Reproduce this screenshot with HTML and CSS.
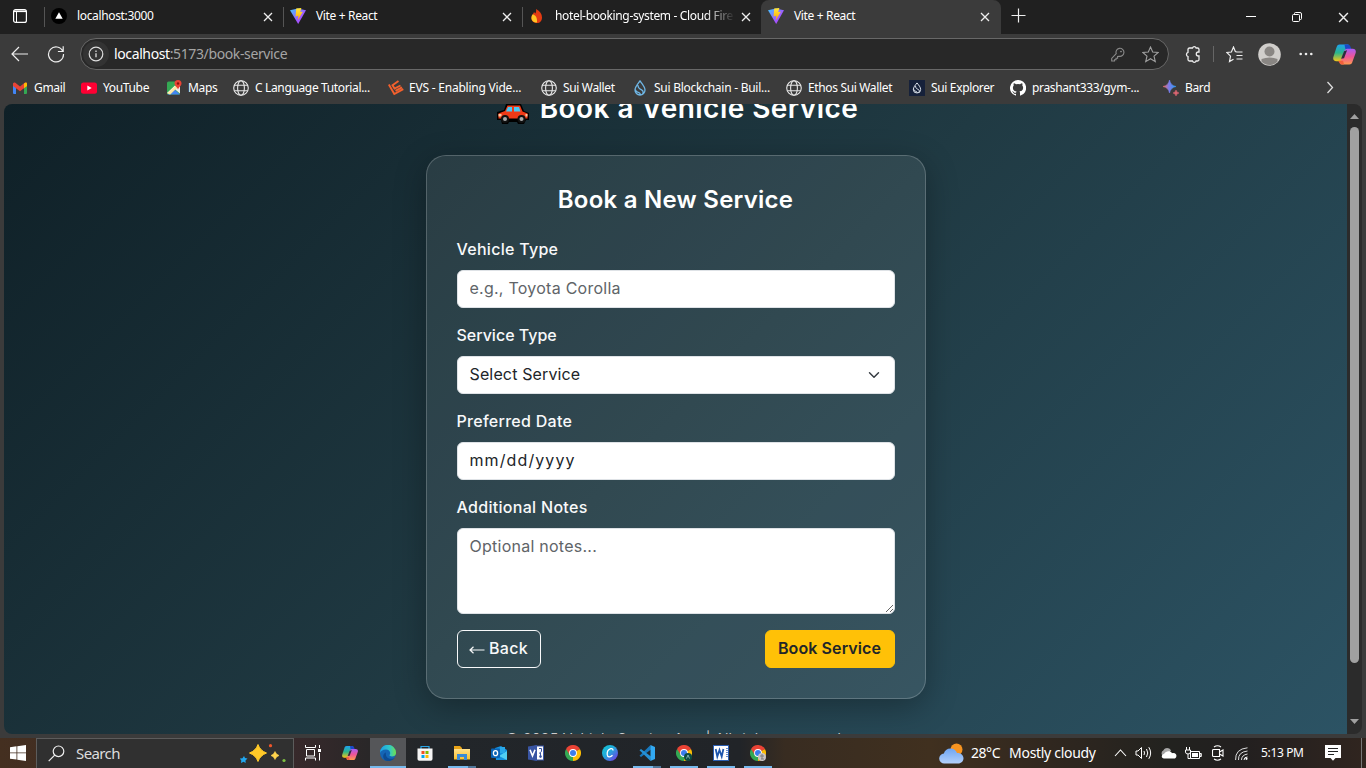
FILE: index.html
```html
<!DOCTYPE html>
<html lang="en">
<head>
<meta charset="utf-8">
<title>Vite + React</title>
<link rel="stylesheet" href="styles.css">
</head>
<body>
<svg class="defs" aria-hidden="true">
  <defs>
    <linearGradient id="gv" x1="0" y1="0" x2="1" y2="1"><stop offset="0" stop-color="#3fc8ff"/><stop offset=".55" stop-color="#9a60ff"/><stop offset="1" stop-color="#bd34fe"/></linearGradient>
    <linearGradient id="gy" x1="0" y1="0" x2="0" y2="1"><stop offset="0" stop-color="#ffe83d"/><stop offset="1" stop-color="#ffa800"/></linearGradient>
    <linearGradient id="gc1" x1="0" y1="0" x2="0" y2="1"><stop offset="0" stop-color="#1fa2f0"/><stop offset=".5" stop-color="#2bb58a"/><stop offset="1" stop-color="#f5c518"/></linearGradient>
    <linearGradient id="gc2" x1="0" y1="0" x2="0" y2="1"><stop offset="0" stop-color="#a95cf5"/><stop offset=".5" stop-color="#ee5598"/><stop offset="1" stop-color="#ff9a4d"/></linearGradient>
    <linearGradient id="ge" x1="0" y1="0" x2="1" y2="0"><stop offset="0" stop-color="#1c9ee8"/><stop offset=".6" stop-color="#2fc8c8"/><stop offset="1" stop-color="#72e04a"/></linearGradient>
    <linearGradient id="gcv" x1="0" y1="0" x2="1" y2="1"><stop offset="0" stop-color="#12c8d2"/><stop offset=".45" stop-color="#22a8dc"/><stop offset="1" stop-color="#7d2ae8"/></linearGradient>
    <linearGradient id="gb" x1="0" y1="0" x2="1" y2="0"><stop offset="0" stop-color="#ef6a5a"/><stop offset=".45" stop-color="#7d7bea"/><stop offset="1" stop-color="#2a9df4"/></linearGradient>
    <linearGradient id="gf" x1="0" y1="0" x2="0" y2="1"><stop offset="0" stop-color="#ffe08a"/><stop offset="1" stop-color="#fbc02d"/></linearGradient>
    <linearGradient id="gcl" x1="0" y1="0" x2="0" y2="1"><stop offset="0" stop-color="#6ea5f2"/><stop offset="1" stop-color="#b3d0fb"/></linearGradient>
  </defs>
  <symbol id="vite" viewBox="0 0 16 16"><path d="M0 2.200 7.800.6 16 2.200 8.200 16z" fill="url(#gv)"/><path d="M6.200.6 11.400 0l-1.200 4 2.600-.3-5 8.500.6-4.400-2.800.6z" fill="url(#gy)"/></symbol>
  <symbol id="x" viewBox="0 0 10 10"><path d="M1 1l8 8M9 1 1 9" stroke="#eee" stroke-width="1.300" fill="none"/></symbol>
  <symbol id="globe" viewBox="0 0 16 16"><g fill="none" stroke="#e8e8e8" stroke-width="1.100"><circle cx="8" cy="8" r="7.300"/><ellipse cx="8" cy="8" rx="3.400" ry="7.300"/><path d="M1.300 5.300h13.400M1.300 10.700h13.400"/></g></symbol>
  <symbol id="copilot" viewBox="0 0 24 22"><path d="M7 .5h8c2 0 2 1.500 1.500 3.500L13 15c-.8 2-2 3-4 3H3.500c-3 0-4-2-3-5L3.500 4C4.100 1.700 5 .5 7 .5z" fill="url(#gc1)"/><path d="M12 .5h3.500c2 0 2.500 1.500 3 3l1 3h-4c-1.500 0-2.300-.5-2.800-2z" fill="#1b48c8"/><path d="M17 21.500H9c-2 0-2-1.500-1.500-3L11 9.500c1-3 2-4.500 4-4.500h5.500c3 0 4 2 3 5l-3 8c-.6 2.200-1.500 3.500-3.500 3.500z" fill="url(#gc2)"/><path d="m11.500 7.500 3.200-1L11.500 15l-3 .5z" fill="#2b2f3a"/><path d="M5.500 17.500h5l1 4H9.500c-2 0-3-1.500-4-4z" fill="#f2603c"/></symbol>
  <symbol id="chrome" viewBox="0 0 16 16"><path d="M8 8 1.070 4A8 8 0 0 1 14.930 4z" fill="#ea4335"/><path d="M8 8 14.930 4A8 8 0 0 1 8 16z" fill="#fbbc05"/><path d="M8 8v8A8 8 0 0 1 1.070 4z" fill="#34a853"/><path d="M8 4.300h6.900L14.930 4H1.100l3.400 5.600z" fill="#ea4335"/><circle cx="8" cy="8" r="3.900" fill="#fff"/><circle cx="8" cy="8" r="3" fill="#3b7ded"/></symbol>
  <symbol id="drop" viewBox="0 0 16 16"><path d="M8 1c2.500 3.300 5 6 5 9a5 5 0 0 1-10 0c0-3 2.500-5.700 5-9zM6 5.200c0 3 1.500 3.800 3.600 4.700 1.600.8 1.900 2.400 1.100 4.200M3.300 9.500c.4 2.200 2 2.700 3.500 3.200 1 .4 1.500 1.100 1.700 2.100" fill="none" stroke="currentColor" stroke-width="1.300"/></symbol>
</svg>

<div class="tabs">
  <div class="tab-menu"><svg width="14" height="14" viewBox="0 0 14 14"><rect x=".6" y=".6" width="12.800" height="12.800" rx="2" fill="none" stroke="#fff" stroke-width="1.200"/><path d="M1 2.300h12" stroke="#fff" stroke-width="1.600"/><path d="M3.500 3v10" stroke="#fff"/></svg></div>
  <div class="tab sep">
    <svg class="fav" viewBox="0 0 16 16"><circle cx="8" cy="8" r="8" fill="#000"/><path d="M8 4.300 11.700 10.800H4.300z" fill="#fff"/></svg>
    <span class="ui tab-title">localhost:3000</span><svg class="close"><use href="#x"/></svg>
  </div>
  <div class="tab sep"><svg class="fav"><use href="#vite"/></svg><span class="ui tab-title">Vite + React</span><svg class="close"><use href="#x"/></svg></div>
  <div class="tab sep"><svg class="fav" viewBox="0 0 16 16"><path d="M7 1c4 2 6 5 6 8.500 0 3.500-2 5.500-5 5.500-4 0-6-3-5.500-6 .3-2 2-3 2.500-5l1.300 1.500C7.200 4 7.300 2.500 7 1z" fill="#e33b12"/><path d="M3.500 6.500c2 0 5 2 4.500 8-4 .3-6-2.500-5.500-5.500.2-1.200.5-1.800 1-2.500z" fill="#ffc423"/></svg><span class="ui tab-title fade">hotel-booking-system - Cloud Fire</span><svg class="close"><use href="#x"/></svg></div>
  <div class="tab active"><svg class="fav"><use href="#vite"/></svg><span class="ui tab-title">Vite + React</span><svg class="close"><use href="#x"/></svg></div>
  <div class="new-tab"><svg width="15" height="15" viewBox="0 0 15 15"><path d="M7.500.5v14M.5 7.500h14" stroke="#eee" stroke-width="1.200"/></svg></div>
  <div class="window-controls">
    <svg width="10" height="10" viewBox="0 0 10 10"><path d="M0 4.500h10" stroke="#fff"/></svg>
    <svg width="10" height="10" viewBox="0 0 10 10"><g fill="none" stroke="#fff"><rect x=".5" y="2.500" width="7" height="7" rx="1"/><path d="M2.500 2V1.500q0-1 1-1H8Q9.500.5 9.500 2v4.500q0 1-1 1H8"/></g></svg>
    <svg width="11" height="11"><use href="#x"/></svg>
  </div>
</div>

<div class="toolbar">
  <svg class="back" width="18" height="16" viewBox="0 0 18 16"><path d="M8 1 1 8l7 7M1 8h16" fill="none" stroke="#eee" stroke-width="1.200"/></svg>
  <svg class="reload" width="18" height="18" viewBox="0 0 18 18"><path d="M15.800 6.200A7.500 7.500 0 1 0 16.500 9M16.200 1.200v5.300h-5.300" fill="none" stroke="#eee" stroke-width="1.200"/></svg>
  <div class="address">
    <span class="info"><svg width="16" height="16" viewBox="0 0 16 16"><circle cx="8" cy="8" r="6.800" fill="none" stroke="#ddd" stroke-width="1.200"/><path d="M8 7.300v4M8 4.500V6" stroke="#ddd" stroke-width="1.300"/></svg></span>
    <span class="ui url"><b>localhost</b>:5173/book-service</span>
    <svg class="key" width="14" height="15" viewBox="0 0 14 15"><path d="M5.200 6.700A4 4 0 1 1 8 9.200L6.600 9.500v1.700H5v1.600H3.500V14H.7v-2.600z" fill="none" stroke="#8a8a8a" stroke-width="1.100"/><circle cx="10" cy="4.600" r=".8" fill="#999"/></svg>
    <svg width="17" height="17" viewBox="0 0 17 17"><path d="m8.500 1 2.200 5 5.500.5-4.200 3.700 1.300 5.400-4.800-2.900-4.800 2.900L5 10.200.8 6.500 6.300 6z" fill="none" stroke="#a0a0a0" stroke-width="1.100"/></svg>
  </div>
  <div class="tools">
    <svg width="17" height="17" viewBox="0 0 17 17"><path d="M4.500 2h3a1.900 1.900 0 0 1 3.600 0h1.400Q14 2 14 3.500V6h-.7a1.900 1.900 0 0 0 0 4h.7v3.500q0 1.500-1.500 1.500h-1.400a1.900 1.900 0 0 1-3.600 0h-3Q3 15 3 13.500v-3a2.200 2.200 0 0 1 0-4.200V3.500Q3 2 4.500 2z" fill="none" stroke="#eee" stroke-width="1.300"/></svg>
    <i class="divider"></i>
    <svg width="17" height="17" viewBox="0 0 17 17"><path d="M10.500 5.800 9.300 5.500 7.500 1 5.400 6 .8 6.500l3.700 3.600-1 5.400 4-2.300M10.500 6h6M10.500 9.500h6M10.500 13h6" fill="none" stroke="#eee" stroke-width="1.200"/></svg>
    <svg width="23" height="23" viewBox="0 0 23 23"><circle cx="11.500" cy="11.500" r="11.300" fill="#d0cecb"/><circle cx="11.500" cy="8.500" r="5" fill="#898683"/><path d="M3.500 16q8-3 16 0v2.500a11 11 0 0 1-16 0z" fill="#898683"/></svg>
    <svg width="14" height="4" viewBox="0 0 14 4"><g fill="#eee"><circle cx="1.700" cy="2" r="1.300"/><circle cx="7" cy="2" r="1.300"/><circle cx="12.300" cy="2" r="1.300"/></g></svg>
    <svg width="23" height="21"><use href="#copilot"/></svg>
  </div>
</div>

<div class="bookmarks">
  <div class="bm"><svg viewBox="0 0 16 16"><path d="M1 3.500h3V14H2q-1 0-1-1z" fill="#4285f4"/><path d="M12 3.500h3V13q0 1-1 1h-2z" fill="#34a853"/><path d="M1 4q0-2 2-1.500l5 4 5-4Q15 2 15 4v2l-7 5.300L1 6z" fill="#ea4335"/><path d="M12 3.500Q15 1.500 15 4v2l-3 2.300z" fill="#fbbc04"/></svg><span class="ui">Gmail</span></div>
  <div class="bm"><svg viewBox="0 0 16 16"><rect y="2.500" width="16" height="11.300" rx="2.500" fill="#ff0033"/><path d="m6.300 5.600 4.400 2.500-4.400 2.500z" fill="#fff"/></svg><span class="ui">YouTube</span></div>
  <div class="bm"><svg viewBox="0 0 16 16"><rect x="1" y="1.500" width="13" height="13" rx="1.500" fill="#34a853"/><path d="m1.500 14.500 6-6 6.500 6z" fill="#4285f4"/><path d="m8 8.500 6-3v8z" fill="#eee"/><path d="M1 13 9 5.500l2 2-7 7z" fill="#fff"/><path d="m1 13.500 9-8.300 2 2-7.500 7.300z" fill="#fbd34d" opacity=".5"/><path d="M12 0a3.500 3.500 0 0 1 3.500 3.500c0 2.500-2.500 3-3.500 6-1-3-3.500-3.500-3.500-6A3.500 3.500 0 0 1 12 0z" fill="#ea4335"/><circle cx="12" cy="3.500" r="1.200" fill="#811411"/></svg><span class="ui">Maps</span></div>
  <div class="bm"><svg><use href="#globe"/></svg><span class="ui">C Language Tutorial...</span></div>
  <div class="bm evs"><svg viewBox="0 0 16 16"><path d="M10.500 1 4.500 5.200l2 3.300 6-3M7.500 10.800l6.500-3.500M.8 4.500 6.300 14l9-4.800" fill="none" stroke="#f4602d" stroke-width="1.900"/></svg><span class="ui">EVS - Enabling Vide...</span></div>
  <div class="bm"><svg><use href="#globe"/></svg><span class="ui">Sui Wallet</span></div>
  <div class="bm blue"><svg><use href="#drop"/></svg><span class="ui">Sui Blockchain - Buil...</span></div>
  <div class="bm"><svg><use href="#globe"/></svg><span class="ui">Ethos Sui Wallet</span></div>
  <div class="bm"><svg class="navy" viewBox="-3 -2 22 20"><use href="#drop" width="16" height="16"/></svg><span class="ui">Sui Explorer</span></div>
  <div class="bm"><svg viewBox="0 0 16 16"><path d="M8 0a8 8 0 0 0-2.530 15.590c.4.070.55-.17.55-.38v-1.340c-2.230.48-2.700-1.070-2.700-1.070-.36-.92-.89-1.170-.89-1.170-.73-.5.050-.49.050-.49.810.060 1.230.83 1.230.83.720 1.230 1.880.87 2.340.67.070-.52.280-.88.510-1.080-1.780-.2-3.650-.89-3.650-3.960 0-.87.310-1.590.83-2.150-.09-.2-.36-1.020.08-2.120 0 0 .67-.21 2.200.82a7.600 7.600 0 0 1 4 0c1.530-1.030 2.200-.82 2.200-.82.440 1.100.17 1.920.08 2.120.51.560.82 1.280.82 2.150 0 3.080-1.870 3.760-3.650 3.960.29.250.54.730.54 1.480v2.200c0 .21.140.46.550.38A8 8 0 0 0 8 0z" fill="#fff"/></svg><span class="ui">prashant333/gym-...</span></div>
  <div class="bm"><svg viewBox="0 0 16 16"><path d="M6.500 0q1 5.500 6.500 6.500-5.500 1-6.500 6.500-1-5.500-6.500-6.500Q5.500 5.500 6.500 0z" fill="url(#gb)" stroke="url(#gb)" stroke-width=".6"/><path d="M13 10q.5 2.500 3 3-2.500.5-3 3-.5-2.500-3-3 2.500-.5 3-3z" fill="#d96570" stroke="#d96570" stroke-width=".5"/></svg><span class="ui">Bard</span></div>
  <svg class="more" width="8" height="13" viewBox="0 0 8 13"><path d="m1.500 1 5 5.500-5 5.500" fill="none" stroke="#ddd" stroke-width="1.300"/></svg>
</div>

<div class="window">
  <main class="view">
    <h1 class="page-title">
      <svg width="32" height="20" viewBox="0 0 32 20"><path d="M9 0h15l3 7 5 2v7h-3l-2 4h-6l-1-2h-8l-1 2H5l-1-4H0V8l7-2z" fill="#000"/><path d="M10.500 1.500h12.500l2.500 6 5 2v5H1.500V9.500L8 7z" fill="#f03a17"/><path d="m11 3-2 4.500h6V3zM17 3v4.500h6.500L22 3z" fill="#48c9f5"/><path d="M1.500 10h3v2.500h-3zM28.500 10h2v2.500h-2z" fill="#f8c9a0"/><g fill="#111"><circle cx="8" cy="15" r="4"/><circle cx="24.500" cy="15" r="4"/></g><g fill="#aaa"><circle cx="8" cy="15" r="2"/><circle cx="24.500" cy="15" r="2"/></g></svg>
      <span>Book a Vehicle Service</span>
    </h1>
    <form class="card">
      <h2 class="card-title">Book a New Service</h2>
      <label class="label l1">Vehicle Type</label>
      <input class="control c1" placeholder="e.g., Toyota Corolla">
      <label class="label l2">Service Type</label>
      <div class="control select"><span>Select Service</span><svg width="12" height="12" viewBox="0 0 16 16"><path d="m2 5 6 6 6-6" fill="none" stroke="#343a40" stroke-width="1.900" stroke-linecap="round" stroke-linejoin="round"/></svg></div>
      <label class="label l3">Preferred Date</label>
      <input class="control c3" value="mm/dd/yyyy">
      <label class="label l4">Additional Notes</label>
      <textarea class="control notes" placeholder="Optional notes..."></textarea>
      <div class="actions"><button type="button" class="btn outline"><svg width="16" height="8" viewBox="0 0 16 8"><path d="M4.500.8 1 4l3.500 3.200M1 4h14.500" fill="none" stroke="#f8f9fa" stroke-width="1.200"/></svg><span>Back</span></button><button type="button" class="btn primary">Book Service</button></div>
    </form>
    <footer class="foot">© 2025 Vehicle Service App | All rights reserved.</footer>
  </main>
  <div class="scrollbar">
    <svg width="9" height="5" viewBox="0 0 9 5"><path d="M4.500 0 9 5H0z" fill="#a0a0a0"/></svg>
    <i class="thumb"></i>
    <svg width="9" height="5" viewBox="0 0 9 5"><path d="M0 0h9L4.500 5z" fill="#a0a0a0"/></svg>
  </div>
</div>

<div class="taskbar">
  <div class="start"><svg width="16" height="16" viewBox="0 0 16 16"><path d="M0 2.300 6.500 1.300V7.500H0zM7.300 1.200 16 0v7.500H7.300zM0 8.300h6.500v6.300L0 13.700zM7.300 8.300H16V16l-8.700-1.200z" fill="#fff"/></svg></div>
  <div class="search">
    <svg width="17" height="17" viewBox="0 0 17 17"><circle cx="10.500" cy="6.300" r="5.300" fill="none" stroke="#eee" stroke-width="1.200"/><path d="m6.700 10.200-6 6" stroke="#eee" stroke-width="1.200"/></svg>
    <span class="ui">Search</span>
    <svg class="sparkle" width="46" height="20" viewBox="0 0 46 20"><path d="M18 .5q2 6 8.500 8.500-6.500 2.500-8.500 8.500-2-6-8.500-8.500Q16 6.500 18 .5z" fill="#ffc928" stroke="#ffc928" stroke-linejoin="round"/><path d="M35 7.500q1 3 4 4-3 1-4 4-1-3-4-4 3-1 4-4z" fill="#ffd34d" stroke="#ffd34d" stroke-width=".6"/><path d="m4 12 1 2 2.500.5-2 2 .2 2.500-2.200-1.200L1 19l.3-2.500-1.500-2 2.700-.2z" fill="#21a7f0"/><circle cx="30.500" cy="1.700" r="1.600" fill="#f0562b"/><circle cx="44" cy="16.500" r="1.600" fill="#7dc142"/></svg>
  </div>
  <div class="apps">
    <div class="app task"><svg viewBox="0 0 16 16"><path d="M.5 0v2.500h10V0M.5 15.500V13h10v2.500M1.500 4.500h8v6.500h-8zM14.500 0v3M14.500 8v7.500" fill="none" stroke="#fff"/><rect x="13" y="4" width="3" height="3" fill="#fff"/></svg></div>
    <div class="app"><svg><use href="#copilot"/></svg></div>
    <div class="app on full"><svg viewBox="0 0 16 16"><circle cx="8" cy="8" r="8" fill="#1465b5"/><path d="M0 8a8 8 0 0 1 16-.5c.2 2.500-1.800 4-4 4-1.500 0-2.500-.6-2.500-1.200 0-.6.700-.9.700-2.300C10.200 6.200 8.500 4.500 6 4.500 2.500 4.500.3 6.500 0 8z" fill="url(#ge)"/><path d="M6 7.500c-1 4 2 7 6.500 6.200 1-.2 2-.7 2.300-1A8 8 0 0 1 5 15.300C2 12 3 8.500 6 7.500z" fill="#0c4b93"/></svg></div>
    <div class="app"><svg viewBox="0 0 16 16"><path d="M4 4V1.500h8V4" fill="none" stroke="#29a6e8" stroke-width="1.200"/><path d="M.5 3.500h15V14q0 1.700-1.700 1.700H2.200Q.5 15.700.5 14z" fill="#f5f5f5"/><path d="M4.500 6h3v3h-3z" fill="#f25022"/><path d="M8.500 6h3v3h-3z" fill="#7fba00"/><path d="M4.500 10h3v3h-3z" fill="#00a4ef"/><path d="M8.500 10h3v3h-3z" fill="#ffb900"/></svg></div>
    <div class="app on multi"><svg viewBox="0 0 16 16"><path d="M0 1h6l2 2v3H0z" fill="#e8a317"/><path d="M0 4h16v10.500H0z" fill="url(#gf)"/><path d="M3 15V9h10v6h-3v-3H6v3z" fill="#3a8ad6"/></svg></div>
    <div class="app"><svg viewBox="0 0 16 16"><path d="M4 3 10 1l6 4v9q0 1-1 1H5z" fill="#1490df"/><path d="m16 6-8 5 8 4z" fill="#50d0f5"/><path d="M9 2h5v6H9z" fill="#28a8ea"/><rect y="3.500" width="9" height="9.500" rx="1" fill="#0a64b5"/><ellipse cx="4.500" cy="8.200" rx="2.100" ry="2.500" fill="none" stroke="#fff" stroke-width="1.300"/></svg></div>
    <div class="app"><svg viewBox="0 0 16 16"><rect x="7" y="1" width="8.500" height="14" fill="#fff" stroke="#3955a3"/><path d="M11 3.500h2.500v3L11 8.500M12.500 8v4.500" fill="none" stroke="#3955a3"/><circle cx="12.500" cy="11.500" r="1.300" fill="#3955a3"/><path d="M0 1.500 9 0v16l-9-1.500z" fill="#3955a3"/><path d="m2 4.800 2.500 6 2.500-6" fill="none" stroke="#fff" stroke-width="1.600"/></svg></div>
    <div class="app"><svg><use href="#chrome"/></svg></div>
    <div class="app"><svg viewBox="0 0 16 16"><circle cx="8" cy="8" r="8" fill="url(#gcv)"/><path d="M10.800 5.500c.5-1.500-.6-2.200-2-1.800C6.500 4.400 5 7 5.200 9.500c.2 2.800 3 3.300 5.300.8" fill="none" stroke="#fff" stroke-width="1.300"/></svg></div>
    <div class="app on multi"><svg viewBox="0 0 16 16"><path d="m11.500 0-9.700 9.500L.5 10.800 2 12 12 4.500z" fill="#1878bd"/><path d="M11.500 16 1.800 6.500.5 5.200 2 4l10 7.500z" fill="#2590d5"/><path d="M11.500 0 16 2v12l-4.500 2z" fill="#32a9f2"/></svg></div>
    <div class="app on"><svg viewBox="0 0 16 16"><use href="#chrome" width="16" height="16"/><circle cx="12" cy="12" r="4" fill="#0c4b41"/><path d="m10.500 13.500 1.500-3.500 1.500 3.500" fill="none" stroke="#9cc" stroke-width=".8"/></svg></div>
    <div class="app on"><svg viewBox="0 0 16 16"><rect x=".5" y=".5" width="15" height="15" fill="#fff" stroke="#2b5db0"/><path d="M13 3.500h2M13 5.500h2M13 7.500h2M13 9.500h2M13 11.500h2" stroke="#2b5db0" stroke-width=".7"/><path d="m2.700 4 1.600 7.500L6.500 5l2.200 6.500L10.400 4" fill="none" stroke="#1f57ad" stroke-width="1.800"/></svg></div>
    <div class="app on"><svg viewBox="0 0 16 16"><use href="#chrome" width="16" height="16"/><circle cx="12" cy="12" r="4" fill="#c9c3c6"/><path d="M10 11h4M11 14h3M12 9v5" stroke="#777" stroke-width=".9"/></svg></div>
  </div>
  <div class="weather"><svg width="25" height="21" viewBox="0 0 25 21"><circle cx="17.500" cy="6.500" r="6" fill="#f79420"/><path d="M5.500 20.500a5 5 0 0 1-.6-10C5.500 7.500 8 5.500 11.500 5.500c3.500 0 5.500 2 6.500 4.500 3.500-.3 6.500 2 6.500 5.300 0 3-2.300 5.200-5.500 5.200z" fill="url(#gcl)"/></svg><span class="ui">28°C</span><span class="ui cloudy">Mostly cloudy</span></div>
  <div class="tray">
    <svg width="13" height="8" viewBox="0 0 13 8"><path d="M1 7 6.500 1 12 7" fill="none" stroke="#fff" stroke-width="1.100"/></svg>
    <svg width="17" height="14" viewBox="0 0 17 14"><path d="M1 5h2l3.500-3.500v11L3 9H1zM9 5q1 2 0 4M11.500 3q2.500 4 0 8M13.800 1.200q3.700 5.800 0 11.600" fill="none" stroke="#fff"/></svg>
    <svg width="17" height="12" viewBox="0 0 17 12"><path d="M3.500 9.500a3.500 3.500 0 0 1 0-6.300C5 .5 9 .2 11 3.500l-5 6z" fill="#a8a8a8"/><path d="M4 11.500c-3 0-3-4 0-4.500C6 3.500 10.500 3.500 12 6.200c3.500-.6 5 1.500 4.300 3.500-.3 1.200-1 1.800-2.300 1.800z" fill="#fff"/></svg>
    <svg width="17" height="13" viewBox="0 0 17 13"><path d="M5.500 4.500h9v7h-9zM15 6.500h1.300v3H15zM1.500 0v3M4.500 0v3M.5 3h5v2q0 2-2.500 2T.5 5zM3 7v4.500h2.500" fill="none" stroke="#fff"/><path d="M7 6h6v4H7z" fill="#fff"/></svg>
    <svg width="12" height="16" viewBox="0 0 12 16"><path d="M1.500 4.500h6v7h-6q-1 0-1-1v-5q0-1 1-1zM7.500 7 11 5v6L7.500 9M2 2q3.500-2.500 7 0M2 14q3.500 2.500 7 0" fill="none" stroke="#fff" stroke-width="1.100"/></svg>
    <svg width="13" height="13" viewBox="0 0 13 13"><path d="M.6 13Q0 2 12.500.8M3.500 13Q3 5 12.500 4M6.500 13q0-5 6-6" fill="none" stroke="#ddd"/><path d="M9 13q0-3 3.500-3" fill="none" stroke="#fff"/><circle cx="11.500" cy="11.800" r="1.100" fill="#fff"/></svg>
    <span class="ui clock">5:13 PM</span>
    <svg class="note" width="16" height="16" viewBox="0 0 16 16"><path d="M0 0h16v13h-5.500L8 15.800 5.500 13H0z" fill="#fff"/><path d="M3 3.500h10M3 6.500h10M3 9.500h6" stroke="#222"/></svg>
  </div>
  <i class="show-desktop"></i>
</div>
</body>
</html>
```
FILE: styles.css
```css
* { box-sizing: border-box; }
body { margin: 0; width: 1366px; height: 768px; overflow: hidden; display: flex; flex-direction: column; background: #3b3b3b; font-family: Inter, sans-serif; }
svg { display: block; flex: none; }
.defs { position: absolute; width: 0; height: 0; }
.ui { font-family: "Noto Sans", sans-serif; white-space: nowrap; color: #fff; font-size: 12px; line-height: 16px; letter-spacing: -.35px; }

.tabs { height: 34px; flex: none; display: flex; background: #202020; }
.tab-menu { width: 44px; display: flex; align-items: center; padding-left: 13px; padding-bottom: 2px; }
.tab { width: 239px; display: flex; align-items: center; padding: 0 10px 2px 7px; }
.sep { background: linear-gradient(#555, #555) 0 7px / 1px 20px no-repeat; }
.fav { width: 16px; height: 16px; margin-right: 10px; }
.close { width: 10px; height: 10px; margin: 1px 0 0 auto; }
.fade { width: 178px; -webkit-mask-image: linear-gradient(90deg, #000 150px, transparent 180px); mask-image: linear-gradient(90deg, #000 150px, transparent 180px); }
.active { width: 240px; padding-right: 11px; background: #3b3b3b; border-radius: 8px 8px 0 0; }
.new-tab { padding: 8px 0 0 10px; }
.window-controls { margin-left: auto; display: flex; gap: 36px; padding-right: 17px; align-items: center; }

.toolbar { height: 37px; flex: none; display: flex; align-items: center; padding: 3px 11px 0 11px; }
.reload { margin: 0 15px 0 18px; }
.address { width: 1089px; height: 32px; flex: none; border: 1px solid #686868; border-radius: 16px; background: #282828; display: flex; align-items: center; padding: 0 9px 0 2px; }
.info { width: 26px; height: 26px; border-radius: 50%; background: #333; display: grid; place-items: center; margin-right: 5px; }
.url { color: #a5a5a5; font-size: 14px; line-height: 20px; letter-spacing: -.38px; }
.url b { color: #fff; font-weight: 400; }
.key { margin: 0 17px 0 auto; }
.tools { margin-left: 16px; display: flex; align-items: center; flex: none; }
.tools > :nth-child(2) { margin: 0 12px 0 11px; }
.tools > :nth-child(4) { margin: 0 18px 0 15px; }
.tools > :nth-child(6) { margin-left: 20px; }
.divider { width: 1px; height: 16px; background: #666; }

.bookmarks { height: 33px; flex: none; display: grid; grid-template-columns: 69px 85px 67px 155px 153px 91px 154px 123px 101px 153px 163px 8px; align-items: center; padding-left: 12px; }
.bm { display: flex; align-items: center; gap: 6px; }
.bm svg { width: 16px; height: 16px; }
.evs { gap: 5px; }
.evs .ui { letter-spacing: -.22px; }
.blue svg { color: #6fb7e6; }
.blue .ui { letter-spacing: -.26px; }
.bm .navy { background: #16213a; color: #e8eef5; }

.window { height: 634px; flex: none; display: flex; padding: 0 4px 3px; background: #3b3b3b; }
.view { width: 1343px; height: 630px; overflow: hidden; border-radius: 8px 0 0 8px; background: linear-gradient(135deg, #0f2027, #203a43 50%, #2c5364); display: flex; flex-direction: column; align-items: center; color: #fff; }
.page-title { height: 66px; flex: none; margin: -15px 0 0 4px; display: flex; gap: 11px; font-size: 28px; font-weight: 600; line-height: 38px; letter-spacing: .45px; white-space: nowrap; }
.page-title svg { margin-top: 15px; }
.card { width: 500px; height: 544px; flex: none; border: 1px solid rgba(255,255,255,.2); border-radius: 20px; background: rgba(255,255,255,.08); box-shadow: 0 8px 32px rgba(0,0,0,.3); padding: 29px 30px 30px; display: flex; flex-direction: column; }
.card-title { margin: 0 0 23px; font-size: 24px; line-height: 29px; font-weight: 600; letter-spacing: .25px; text-align: center; }
.label { font-size: 16px; font-weight: 500; line-height: 24px; margin-bottom: 9px; height: 24px; margin-top: -1px; color: #f8f9fa; }
.l1 { letter-spacing: .28px; margin-top: 0; }
.l2 { letter-spacing: 0; }
.l3 { letter-spacing: .28px; }
.l4 { letter-spacing: .3px; }
.control { height: 38px; flex: none; width: 438px; border: 1px solid #dee2e6; border-radius: 6px; background: #fff; padding: 5px 12px 7px; margin: 0 0 16px; font: 16px/24px Inter, sans-serif; letter-spacing: .25px; color: #212529; outline: 0; }
.control::placeholder { color: #606468; }
.select { display: flex; align-items: center; justify-content: space-between; padding-right: 14px; letter-spacing: .14px; }
.select svg { margin-top: 2px; }
.c3 { letter-spacing: 1.1px; }
.notes { height: 86px; }
.actions { display: flex; justify-content: space-between; }
.btn { height: 38px; border-radius: 6px; font: 500 16px/24px Inter, sans-serif; padding: 0 12px 2px; border: 1px solid #f8f9fa; background: transparent; color: #f8f9fa; display: flex; align-items: center; justify-content: center; gap: 4px; white-space: nowrap; }
.btn svg { margin-top: 4px; }
.outline { width: 84px; letter-spacing: .3px; }
.primary { width: 130px; background: #ffc107; border-color: #ffc107; color: #212529; font-weight: 600; letter-spacing: .1px; }
.foot { margin-top: 30px; font-size: 14px; line-height: 20px; letter-spacing: .3px; color: #ccc; white-space: nowrap; }

.scrollbar { width: 15px; height: 630px; background: #2b2b2b; border-radius: 0 8px 8px 0; display: flex; flex-direction: column; align-items: center; padding: 10px 0; }
.thumb { width: 9px; height: 536px; border-radius: 5px; background: #a0a0a0; margin: 8px 0 auto; }

.taskbar { height: 30px; flex: none; display: flex; background: linear-gradient(90deg, #442f20 0, #38292b 290px, #292728 370px, #22262a 430px, #212428 740px, #382c21 785px, #40301f 930px, #30271f 1050px, #22221f 1170px, #221f1f 1240px, #30251f 1366px); }
.start { width: 36px; display: grid; place-items: center; }
.search { width: 258px; border: 1px solid #5c5c5c; border-bottom: 0; background: #303030; display: flex; align-items: center; padding: 0 7px 0 11px; }
.search .ui { font-size: 15px; letter-spacing: -.6px; margin: -2px 0 0 11px; color: #ddd; }
.sparkle { margin-left: auto; }
.apps { display: grid; grid-template-columns: 37px 37px 36px repeat(10, 37px); margin-left: 2px; }
.app { display: grid; place-items: center; }
.app svg { width: 16px; height: 16px; }
.task svg, .task + .app svg { margin-right: 3px; }
.on { background: linear-gradient(#76b9ed, #76b9ed) 50% 100% / 28px 2px no-repeat; }
.full { background: linear-gradient(#76b9ed, #76b9ed) 0 100% / 100% 2px no-repeat, #555659; }
.multi { background: linear-gradient(90deg, #76b9ed 20px, #50779a 20px) 50% 100% / 28px 2px no-repeat; }
.weather { width: 158px; margin-left: 163px; display: flex; align-items: center; }
.weather .ui { font-size: 14px; line-height: 18px; margin: -1px 0 0 7px; letter-spacing: -.45px; }
.weather .cloudy { margin-left: 9px; letter-spacing: -.3px; }
.tray { display: flex; align-items: center; margin-left: 17px; gap: 8px; flex: none; }
.tray svg:nth-child(5) { margin-left: 2px; }
.tray svg:nth-child(6) { margin-left: 3px; }
.clock { margin-left: 5px; margin-top: -1px; }
.note { margin-left: 13px; }
.show-desktop { width: 1px; margin: 0 4px 0 auto; background: #777; }
```
